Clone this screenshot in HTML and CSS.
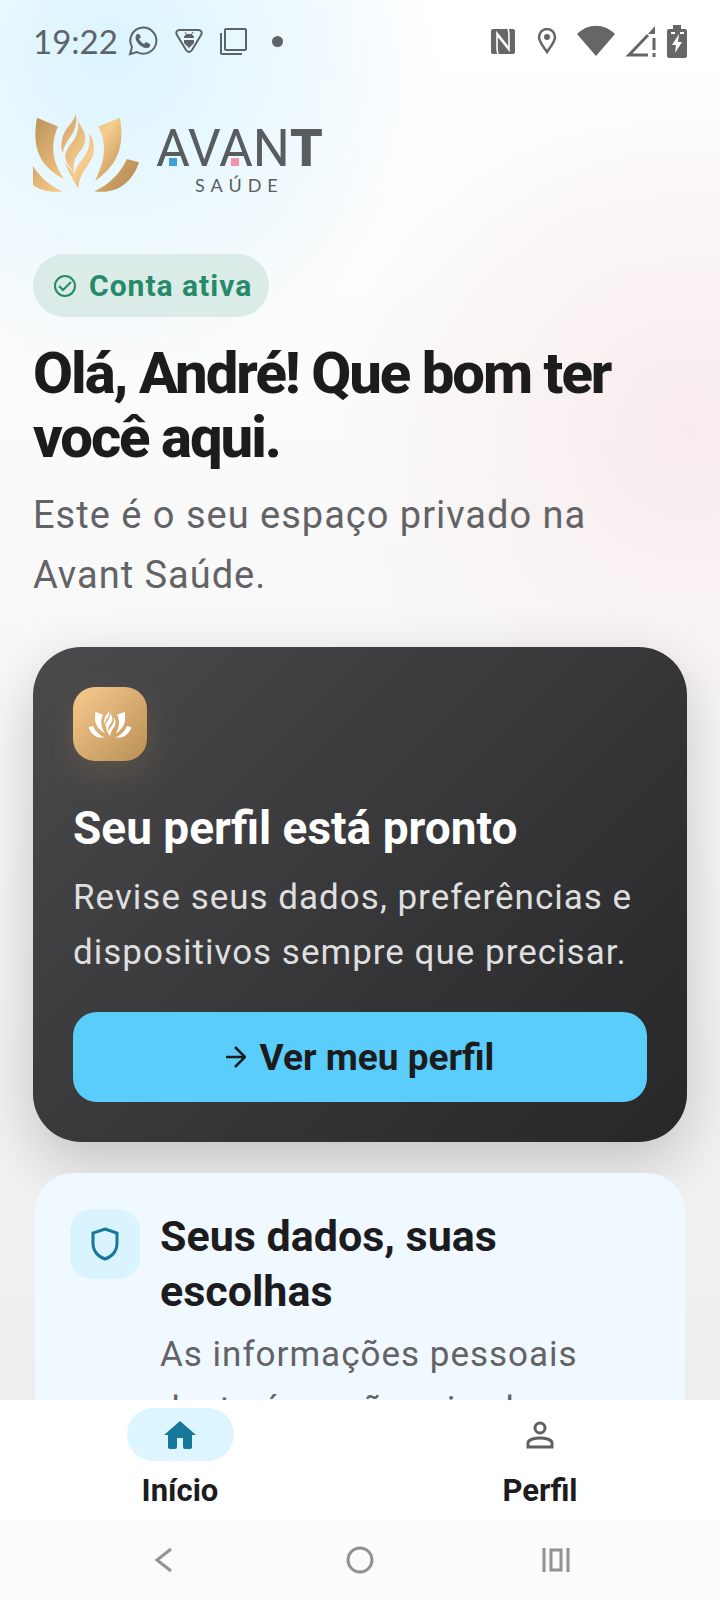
FILE: index.html
```html
<!DOCTYPE html>
<html lang="pt-BR">
<head>
  <meta charset="UTF-8">
  <meta name="viewport" content="width=device-width, initial-scale=1">
  <title>Avant Saúde</title>
  <link rel="stylesheet" href="styles.css">
</head>
<body>

  <!-- shared lotus mark -->
  <svg class="defs" aria-hidden="true">
    <defs>
      <linearGradient id="gold" gradientUnits="userSpaceOnUse" x1="40" y1="60" x2="330" y2="270">
        <stop offset="0" stop-color="#b8935d"/>
        <stop offset="0.3" stop-color="#e0b273"/>
        <stop offset="0.55" stop-color="#f6cd8f"/>
        <stop offset="0.8" stop-color="#cda063"/>
        <stop offset="1" stop-color="#b58d58"/>
      </linearGradient>
      <g id="lotus">
        <path d="M235 78L300 52C306 92 306 124 296 154C284 190 260 215 225 242C243 202 254 172 251 135C249 112 243 95 235 78Z"/>
        <path d="M113 78L50 52C43 92 43 124 53 154C65 190 94 216 131 237C109 202 97 172 99 135C100 112 106 95 113 78Z"/>
        <path d="M320 176L357 186C345 226 314 262 275 271C255 276 238 275 222 273C264 255 302 220 320 176Z"/>
        <path d="M28 176L-9 186C3 226 34 262 73 271C93 276 112 275 127 273C84 255 46 220 28 176Z"/>
        <path d="M174 46C172 62 182 77 190 91C202 116 193 138 178 156C160 177 158 194 162 218C151 200 136 189 135 169C135 148 151 135 161 119C174 99 177 72 174 46Z"/>
        <path d="M167 40C164 57 150 70 138 87C125 107 119 134 127 160C131 136 142 121 154 104C167 84 171 62 167 40Z"/>
        <path d="M207 99C221 118 226 143 218 166C209 193 178 215 174 264C163 244 146 220 133 184C144 202 156 210 163 222C168 192 196 172 204 147C209 130 210 116 207 99Z"/>
      </g>
    </defs>
  </svg>

  <header class="status-bar">
    <div class="status-group status-left">
      <span class="clock">19:22</span>
      <svg width="30" height="30" viewBox="0 0 30 30" fill="none" stroke="currentColor" stroke-width="2">
        <path d="M2 28L4 21A13 13 0 1 1 9 26Z"/>
        <path d="M9 8C7 10 7 13 9 16C12 20 15 22 19 22C21 22 23 20 22 18L18 16L16 18C14 17 12 15 11 13L13 11L11 8Z" fill="currentColor" stroke="none"/>
      </svg>
      <svg width="28" height="26" viewBox="0 0 28 26" fill="none" stroke="currentColor" stroke-width="2">
        <path d="M4 2H24Q28 3 26 7L17 22Q14 26 11 22L2 7Q0 3 4 2Z"/>
        <path d="M9 10C9 7 11 6 14 6S19 7 19 10ZM9 12H19V15L14 20L9 15Z" fill="currentColor" stroke="none"/>
        <path d="M10 4L12 7M18 4L16 7" stroke-width="1"/>
      </svg>
      <svg width="27" height="27" viewBox="0 0 27 27" fill="none" stroke="currentColor" stroke-width="2">
        <rect x="5" y="1" width="21" height="21" rx="1"/>
        <path d="M1 5V25Q1 26 2 26H22"/>
      </svg>
      <span class="dot"></span>
    </div>
    <div class="status-group status-right">
      <svg width="24" height="25" viewBox="0 0 24 25">
        <rect width="24" height="25" rx="2" fill="currentColor"/>
        <path d="M7 25Q6 22 6 19V4L17 18M17 0Q18 3 18 6V21L7 7" stroke="#fff" stroke-width="1.6" fill="none"/>
      </svg>
      <svg width="20" height="26" viewBox="0 0 20 26" fill="none" stroke="currentColor" stroke-width="2.5">
        <path d="M10 24C6 18 2 14 2 9A8 8 0 0 1 18 9C18 14 14 18 10 24Z"/>
        <circle cx="10" cy="9" r="3" fill="currentColor" stroke="none"/>
      </svg>
      <svg class="wifi" width="38" height="32" viewBox="0 0 38 32" fill="currentColor"><path d="M19 31L0 9C11-2 27-2 38 9Z"/></svg>
      <svg width="32" height="32" viewBox="0 0 32 32" fill="none" stroke="currentColor" stroke-width="3">
        <path d="M23 10L4 30H23"/>
        <path d="M30 1V9H23Z" fill="currentColor" stroke="none"/>
        <path d="M29 13V25M29 28V32"/>
      </svg>
      <svg width="20" height="33" viewBox="0 0 20 33" fill="currentColor">
        <path d="M6 0H14V4H18Q20 4 20 6V31Q20 33 18 33H2Q0 33 0 31V6Q0 4 2 4H6Z"/>
        <path d="M12 9L5 20H9L8 28L15 17H11ZM4 7H8V9H4ZM13 7H17V9H13Z" fill="#fff"/>
      </svg>
    </div>
  </header>

  <main class="content">
    <div class="brand">
      <svg class="brand-mark" viewBox="38 38 322 240" fill="url(#gold)"><use href="#lotus"/></svg>
      <div class="brand-text">
        <span class="brand-name">AVAN<b>T</b></span>
        <span class="brand-sub">SAÚDE</span>
      </div>
    </div>

    <p class="badge">
      <svg width="24" height="24" viewBox="0 0 24 24" fill="none" stroke="currentColor" stroke-width="2">
        <circle cx="12" cy="12" r="10"/>
        <path d="M6 12L10 16L18 8"/>
      </svg>
      Conta ativa
    </p>

    <h1>Olá, André! Que bom ter você aqui.</h1>
    <p class="lead">Este é o seu espaço privado na Avant Saúde.</p>

    <section class="profile-card">
      <div class="profile-icon">
        <svg viewBox="-12 38 372 240" fill="#fff"><use href="#lotus"/></svg>
      </div>
      <h2>Seu perfil está pronto</h2>
      <p>Revise seus dados, preferências e dispositivos sempre que precisar.</p>
      <button type="button" class="primary-btn">
        <svg width="20" height="22" viewBox="0 0 20 22" fill="none" stroke="currentColor" stroke-width="2.5"><path d="M0 11H18M9 1L19 11L9 21"/></svg>
        Ver meu perfil
      </button>
    </section>

    <section class="info-card">
      <div class="info-icon">
        <svg width="28" height="34" viewBox="0 0 28 34" fill="none" stroke="currentColor" stroke-width="3"><path d="M14 2L26 6V16C26 24 21 30 14 32C7 30 2 24 2 16V6Z"/></svg>
      </div>
      <div class="info-text">
        <h3>Seus dados, suas escolhas</h3>
        <p>As informações pessoais desta área são privadas.</p>
      </div>
    </section>
  </main>

  <nav class="tabs">
    <a href="#inicio" class="tab active">
      <span class="tab-icon">
        <svg width="32" height="28" viewBox="0 0 32 28" fill="currentColor"><path d="M16 0L32 14H28V26Q28 28 26 28H21Q19 28 19 26V17H13V26Q13 28 11 28H6Q4 28 4 26V14H0Z"/></svg>
      </span>
      Início
    </a>
    <a href="#perfil" class="tab">
      <span class="tab-icon">
        <svg width="28" height="28" viewBox="0 0 28 28" fill="none" stroke="currentColor" stroke-width="3"><circle cx="14" cy="7" r="5"/><path d="M2 26V22C2 18 10 17 14 17S26 18 26 22V26Z"/></svg>
      </span>
      Perfil
    </a>
  </nav>

  <footer class="system-nav">
    <button type="button" aria-label="Voltar">
      <svg width="28" height="28" viewBox="0 0 28 28"><path d="M21 3L7 14L21 25"/></svg>
    </button>
    <button type="button" aria-label="Tela inicial">
      <svg width="28" height="28" viewBox="0 0 28 28"><circle cx="14" cy="14" r="12"/></svg>
    </button>
    <button type="button" aria-label="Recentes">
      <svg width="28" height="28" viewBox="0 0 28 28"><path d="M2 2V26M26 2V26M9 4H19V24H9Z"/></svg>
    </button>
  </footer>

</body>
</html>
```
FILE: styles.css
```css
* {
  box-sizing: border-box;
}

body {
  margin: 0;
  height: 100vh;
  display: flex;
  flex-direction: column;
  font-family: Roboto, 'Liberation Sans', sans-serif;
  color: #1c1c1e;
  background:
    radial-gradient(circle at 110px 50px, #dbf4ff 0, rgba(219, 244, 255, 0.6) 140px, rgba(219, 244, 255, 0) 330px),
    radial-gradient(circle at 690px 430px, #f8ebed 0, rgba(248, 235, 237, 0.6) 150px, rgba(248, 235, 237, 0) 350px),
    linear-gradient(#ffffff 0, #fafafa 500px, #eeeeee 1400px);
}

h1, h2, h3, p {
  margin: 0;
}

svg {
  display: block;
  flex: none;
}

.defs {
  position: absolute;
  width: 0;
  height: 0;
}

/* status bar */
.status-bar {
  display: flex;
  justify-content: space-between;
  align-items: center;
  flex: none;
  height: 82px;
  padding: 0 33px;
  color: #5c6466;
}

.status-group {
  display: flex;
  align-items: center;
  gap: 10px;
}

.status-left svg {
  margin-right: 7px;
}

.status-right {
  color: #666;
}

.status-right svg:first-child {
  margin-right: 12px;
}

.wifi {
  margin-left: 10px;
}

.clock {
  font-family: Lato, sans-serif;
  font-size: 33px;
}

.dot {
  width: 11px;
  height: 11px;
  margin-left: 8px;
  border-radius: 50%;
  background: currentColor;
}

/* content */
.content {
  flex: 1;
  min-height: 0;
  overflow: hidden;
  padding: 31px 33px 0;
}

.brand {
  display: flex;
  align-items: flex-start;
  gap: 16px;
}

.brand-mark {
  width: 107px;
  height: 80px;
}

.brand-text {
  display: flex;
  flex-direction: column;
  align-items: center;
  padding-top: 8px;
  color: #5a5d60;
}

.brand-name {
  position: relative;
  font-size: 52px;
  font-weight: 400;
  line-height: 56px;
}

.brand-name b {
  font-weight: 900;
}

/* coloured squares inside the two As */
.brand-name::before,
.brand-name::after {
  content: "";
  position: absolute;
  bottom: 11px;
  left: 13px;
  width: 8px;
  height: 8px;
  background: #429fd9;
}

.brand-name::after {
  left: 75px;
  background: #f592a8;
}

.brand-sub {
  font-family: Lato, sans-serif;
  font-size: 18px;
  line-height: 16px;
  letter-spacing: 6px;
}

.badge {
  display: flex;
  align-items: center;
  gap: 12px;
  width: fit-content;
  height: 63px;
  margin-top: 61px;
  padding: 0 17px 0 20px;
  border-radius: 32px;
  background: #dbebe8;
  color: #248a69;
  font-size: 30px;
  font-weight: 700;
  letter-spacing: 1px;
}

h1 {
  margin-top: 24px;
  font-size: 58px;
  font-weight: 800;
  line-height: 64px;
  letter-spacing: -2px;
}

.lead {
  margin-top: 16px;
  color: #636366;
  font-size: 38px;
  line-height: 60px;
  letter-spacing: 1px;
}

.profile-card {
  margin-top: 42px;
  padding: 40px;
  border-radius: 48px;
  background: linear-gradient(135deg, #4a4a4c 0%, #363638 55%, #272729 100%);
  box-shadow: 0 20px 60px rgba(0, 0, 0, 0.2);
  color: #fff;
}

.profile-icon {
  display: grid;
  place-items: center;
  width: 74px;
  height: 74px;
  border-radius: 22px;
  background: linear-gradient(135deg, #f8cb8e, #b98f55);
  box-shadow: 0 12px 36px rgba(200, 155, 90, 0.2);
}

.profile-icon svg {
  width: 44px;
  height: 28px;
}

.profile-card h2 {
  margin-top: 39px;
  font-size: 46px;
  line-height: 56px;
}

.profile-card p {
  margin-top: 14px;
  color: #dedede;
  font-size: 35px;
  line-height: 55px;
  letter-spacing: 1px;
}

.primary-btn {
  display: flex;
  align-items: center;
  justify-content: center;
  gap: 14px;
  width: 100%;
  height: 90px;
  margin-top: 32px;
  border: none;
  border-radius: 24px;
  background: #5bcdfa;
  color: #1c1c1e;
  font: 700 37px Roboto, 'Liberation Sans', sans-serif;
  cursor: pointer;
}

.info-card {
  display: flex;
  gap: 20px;
  margin: 31px 2px 0;
  padding: 36px 35px 48px;
  border-radius: 38px;
  background: #f0f9ff;
}

.info-icon {
  display: grid;
  place-items: center;
  flex: none;
  width: 70px;
  height: 70px;
  border-radius: 22px;
  background: #d9f3ff;
  color: #17789c;
}

.info-text h3 {
  font-size: 43px;
  line-height: 55px;
}

.info-text p {
  margin-top: 8px;
  color: #636366;
  font-size: 35px;
  line-height: 55px;
  letter-spacing: 1px;
}

/* bottom tabs */
.tabs {
  display: flex;
  flex: none;
  height: 120px;
  padding-top: 8px;
  background: #fff;
}

.tab {
  flex: 1;
  display: flex;
  flex-direction: column;
  align-items: center;
  gap: 12px;
  color: #1c1c1e;
  font-size: 31px;
  font-weight: 700;
  line-height: 36px;
  text-decoration: none;
}

.tab-icon {
  display: grid;
  place-items: center;
  width: 107px;
  height: 53px;
  border-radius: 27px;
  color: #5f5f61;
}

.active .tab-icon {
  background: #dcf5ff;
  color: #17789c;
}

.system-nav {
  display: flex;
  justify-content: space-between;
  align-items: center;
  flex: none;
  height: 80px;
  padding: 0 150px;
  background: #fbfbfb;
}

.system-nav button {
  padding: 0;
  border: none;
  background: none;
}

.system-nav svg {
  fill: none;
  stroke: #929292;
  stroke-width: 3;
}
```
